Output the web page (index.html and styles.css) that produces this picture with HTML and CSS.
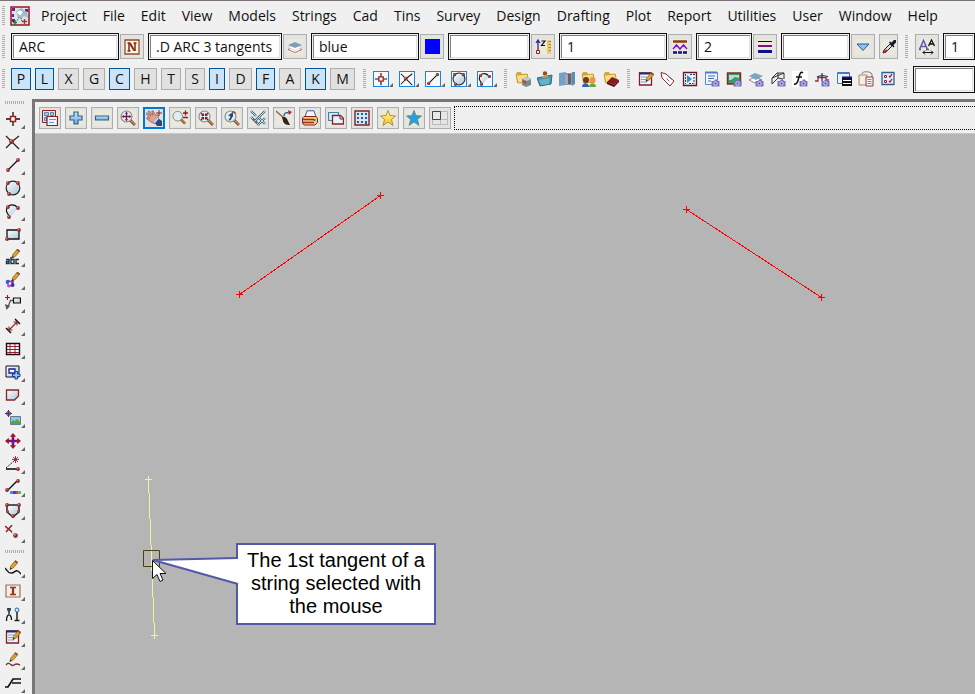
FILE: index.html
```html
<!DOCTYPE html>
<html lang="en">
<head>
<meta charset="utf-8">
<title>Project</title>
<link rel="stylesheet" href="styles.css">
</head>
<body>
<svg class="defs" aria-hidden="true">
  <defs>
    <linearGradient id="ice" x1="0" y1="0" x2="1" y2="1"><stop offset="0" stop-color="#fff"/><stop offset="1" stop-color="#a9c4d6"/></linearGradient>
    <linearGradient id="sky" x1="0" y1="0" x2="0" y2="1"><stop offset="0" stop-color="#c4e6fa"/><stop offset="1" stop-color="#6badde"/></linearGradient>
    <linearGradient id="gold" x1="0" y1="0" x2="0" y2="1"><stop offset="0" stop-color="#fff59a"/><stop offset="1" stop-color="#f2c822"/></linearGradient>
  </defs>
  <symbol id="node" viewBox="0 0 4 4"><circle cx="2" cy="2" r="1.9" fill="#8e2b2b"/><circle cx="1.5" cy="1.4" r=".8" fill="#d28a8a"/></symbol>
  <symbol id="cam" viewBox="0 0 9 8"><path d="M1 2h2l1-1.500h2L7 2h1.500v5.500H.5V2z" fill="#7a72c0"/><circle cx="4.500" cy="4.500" r="2.200" fill="#c3c0ee"/><circle cx="4.500" cy="4.500" r="1" fill="#4a4292"/></symbol>
  <symbol id="pencil" viewBox="0 0 10 11"><path d="M1 10l1-4 5-6 3 2-5 6z" fill="#dda326" stroke="#6f5013" stroke-width=".7"/><path d="M7 0l3 2-1 1.300-3-2z" fill="#9a4640"/><path d="M1 10l.6-2.300L3.400 9z" fill="#222"/></symbol>
  <symbol id="folder" viewBox="0 0 16 16"><path d="M1 3l1-2h4l1 2h6v9H2z" fill="#d9a83a"/><path d="M1 4l11-1 2 8-11 1z" fill="#f7dd83" stroke="#b98f32" stroke-width=".8"/></symbol>
  <symbol id="lens" viewBox="0 0 16 16"><path d="M10 10l5 5" stroke="#8b5a38" stroke-width="3"/><path d="M10 10l5 4.500" stroke="#d99a5c"/><circle cx="6.500" cy="6.500" r="5.500" fill="#e3edf1" stroke="#7c8b92" stroke-width="1.100"/></symbol>

  <symbol id="i-app" viewBox="0 0 20 20"><path d="M1 1h18v18H1z" fill="#d7e6ed" stroke="#9a1420" stroke-width="1.500"/><path d="M2 2h3v3H2zM2 8h2v3H2zM2 13h3v3H2zM15 3h3v3h-3z" fill="#83108c"/><path d="M7 5l4-3 6 4 1 6-4-2-3 3-4-3z" fill="#9fc1d2"/><path d="M6 6l4-2 4 2-4 4zM12 6l4 2" fill="#fff" stroke="#8ba5b3" stroke-width=".6"/><path d="M5 14v5M3 16.500h4" stroke="#11832a" stroke-width="1.300"/><path d="M14.500 13v5M12 15.500h5" stroke="#e41616" stroke-width="1.300"/><path d="M9 11l-2 4M11 12l1 4" stroke="#333" stroke-dasharray="1 1"/></symbol>
  <symbol id="i-name" viewBox="0 0 16 16"><path d="M1 1h14v14H1z" fill="#f8f5ee" stroke="#9a4a22" stroke-width="1.300"/><path d="M3.500 4h3M9.500 4h3M5 4v8M11 4v8M3.500 12h3" stroke="#812c0c" stroke-width="1.500"/><path d="M4.500 4h2.500l4.500 8H9.500z" fill="#812c0c"/></symbol>
  <symbol id="i-layers" viewBox="0 0 16 16"><path d="M1 10.500l7-3 7 3-7 3z" fill="#fff" stroke="#c04a4a" stroke-width=".8"/><path d="M1 8.500L8 5.500l7 3-7 3z" fill="#fff" stroke="#b9c6ce" stroke-width=".6"/><path d="M1 6l7-3L15 6 8 9z" fill="#7d9fb8"/></symbol>
  <symbol id="i-z" viewBox="0 0 16 16"><path d="M3 12V2M1 4l2-3 2 3" fill="none" stroke="#1b2e9a" stroke-width="1.300"/><path d="M1.500 11.500h3v3h-3z" fill="#fff" stroke="#a01818"/><path d="M6.500 2h3.500L6.500 6.500H10" fill="none" stroke="#111" stroke-width="1.200"/><path d="M12 1h4v14h-4z" fill="#efcc67"/><path d="M13.500 2.500H16M13.500 5.500H16M13.500 8.500H16M13.500 11.500H16" stroke="#a9853a"/></symbol>
  <symbol id="i-style" viewBox="0 0 16 16"><path d="M1 2.500h14" stroke="#85420e" stroke-width="2.500"/><path d="M1 10l3.500-4L8 10l3.500-4L15 10" fill="none" stroke="#7d18c8" stroke-width="1.500"/><path d="M1 13.500h14" stroke="#10108c" stroke-width="2.500" stroke-dasharray="4 1"/></symbol>
  <symbol id="i-weight" viewBox="0 0 16 16"><path d="M1 2.500h14" stroke="#111"/><path d="M1 7h14" stroke="#7e0f86" stroke-width="2"/><path d="M1 12.500h14" stroke="#10108c" stroke-width="3"/></symbol>
  <symbol id="i-down" viewBox="0 0 16 16"><path d="M2 5h12l-6 6.500z" fill="#85c6f5" stroke="#2d5796"/></symbol>
  <symbol id="i-dropper" viewBox="0 0 16 16"><path d="M2 14l1-3 6-6 2 2-6 6z" fill="#c9e0ee" stroke="#222"/><path d="M2.500 14l1-2.500 2-1 1.500 1-2 2z" fill="#a6262b"/><path d="M8 3.500l1-1 1.500 1L13 1h2v2.500L12.500 6l1 1.500-1 1z" fill="#17172e"/></symbol>
  <symbol id="i-aa" viewBox="0 0 16 16"><path d="M.5 10.500L4.500 1.500 8.500 10.500M2.500 7.500h4.500M-1 10.500h3M7 10.500h3" fill="none" stroke="#6455ad" stroke-width="1.500"/><path d="M9.500 7L12.500 1l3 6M10.500 5h4" fill="none" stroke="#111" stroke-width="1.300"/><path d="M4 13.500h10M6 11.500l-2 2 2 2M12 11.500l2 2-2 2" fill="none" stroke="#111"/></symbol>

  <symbol id="i-point" viewBox="0 0 16 16"><path d="M8 1v14M1 8h14" stroke="#111" stroke-width="1.300"/><path d="M5.500 5.500h5v5h-5z" fill="#fff" stroke="#a01c1c" stroke-width="1.500"/></symbol>
  <symbol id="i-cross" viewBox="0 0 16 16"><path d="M1 2l5 5 8 8M14 2L9 6 1 14" fill="none" stroke="#222" stroke-width="1.200"/><use href="#node" x="4" y="5" width="5" height="5"/></symbol>
  <symbol id="i-line" viewBox="0 0 16 16"><path d="M3 13L13 3" stroke="#111" stroke-width="1.300"/><use href="#node" x="1" y="11" width="4" height="4"/><use href="#node" x="11" y="1" width="4" height="4"/></symbol>
  <symbol id="i-circle" viewBox="0 0 16 16"><circle cx="8" cy="8" r="6.800" fill="url(#ice)" stroke="#222" stroke-width="1.200"/><use href="#node" x="1" y="1" width="4" height="4"/><use href="#node" x="11" y="1" width="4" height="4"/><use href="#node" x="2" y="12" width="4" height="4"/></symbol>
  <symbol id="i-arc" viewBox="0 0 16 16"><path d="M13 5C8-1 1 3 2 9l3 5z" fill="url(#ice)"/><path d="M13 5C9 0 1 1 1.500 8.500L4 13" fill="none" stroke="#111" stroke-width="1.200"/><use href="#node" x="11" y="3" width="4" height="4"/><use href="#node" x="1" y="2" width="4" height="4"/><use href="#node" x="2" y="12" width="4" height="4"/></symbol>
  <symbol id="i-rect" viewBox="0 0 16 16"><path d="M2 4h12v9H2z" fill="url(#ice)" stroke="#111" stroke-width="1.300"/><use href="#node" x="0" y="11" width="4" height="4"/><use href="#node" x="12" y="2" width="4" height="4"/></symbol>
  <symbol id="i-text" viewBox="0 0 16 16"><path d="M1 10.500h3v4H1.500v-2H4M6 8v6.500h3v-4H6M14 10.500h-3v4h3" fill="none" stroke="#163248" stroke-width="1.400"/><use href="#pencil" x="6" y="0" width="9" height="10"/></symbol>
  <symbol id="i-paint" viewBox="0 0 16 16"><circle cx="3" cy="10" r="2.300" fill="#2861d8"/><circle cx="7" cy="10" r="2" fill="#9c2dc0"/><circle cx="4" cy="13.500" r="2" fill="#ca4ac4"/><circle cx="7.500" cy="13" r="2" fill="#2a3494"/><circle cx="5" cy="11.500" r="1.300" fill="#fff"/><use href="#pencil" x="6" y="0" width="9" height="10"/></symbol>
  <symbol id="i-leader" viewBox="0 0 16 16"><path d="M2.500 0v5M0 2.500h5" stroke="#a01c1c" stroke-width="1.200"/><path d="M9 5.500H5.500L3 12" fill="none" stroke="#555" stroke-width="1.300"/><path d="M0 9l5 2-3.500 4z" fill="#555"/><path d="M8.500 3h7v5h-7z" fill="url(#ice)" stroke="#111" stroke-width="1.200"/></symbol>
  <symbol id="i-dim" viewBox="0 0 16 16"><path d="M1 10l5 5M10 1l5 5" stroke="#111" stroke-width="1.500"/><path d="M4 12l8-8M4 8.500V12h3.500M8.500 4H12v3.500" fill="none" stroke="#a02020" stroke-width="1.100"/></symbol>
  <symbol id="i-table" viewBox="0 0 16 16"><path d="M1.500 2.500h13v11h-13z" fill="#fff" stroke="#111" stroke-width="1.400"/><path d="M2 5.500h12M2 8.500h12M2 11.500h12M5 3v10M10 3v10" stroke="#9a1c2c"/></symbol>
  <symbol id="i-viewadd" viewBox="0 0 16 16"><path d="M1 2h13v11H1z" fill="url(#ice)" stroke="#111"/><path d="M4 5h6v4H4z" fill="#fff" stroke="#1818a0" stroke-width="1.300"/><path d="M10 7.500h2.500V10H15v2.500h-2.500V15H10v-2.500H7.500V10H10z" fill="#8fcaf2" stroke="#193e8c"/></symbol>
  <symbol id="i-poly" viewBox="0 0 16 16"><path d="M1.500 3h12v6l-4 4h-8z" fill="url(#ice)" stroke="#8d2525" stroke-width="1.300"/></symbol>
  <symbol id="i-image" viewBox="0 0 16 16"><circle cx="3.500" cy="3.500" r="2" fill="#aac8ee" stroke="#23408f"/><path d="M3.500 0v7M0 3.500h7" stroke="#a01c1c"/><path d="M5.500 6.500h10v8h-10z" fill="#8cc6ee" stroke="#667b93"/><path d="M6 12l2-2 2 1 2-2 3 3v2H6z" fill="#55a836"/></symbol>
  <symbol id="i-move" viewBox="0 0 16 16"><path d="M8 2v12M2 8h12" stroke="#76118b" stroke-width="2.600"/><path d="M8 0l3.200 3.800H4.800zM8 16l3.200-3.800H4.800zM0 8l3.800-3.200v6.400zM16 8l-3.800-3.200v6.400z" fill="#9e1b26"/></symbol>
  <symbol id="i-angle" viewBox="0 0 16 16"><path d="M1 12L9 5" stroke="#222" stroke-dasharray="2 1"/><path d="M10.500 0v7M7 3.500h7M8 1l5 5M13 1L8 6" stroke="#a01c1c" stroke-width=".9"/><path d="M1 13h12" stroke="#111" stroke-width="1.600"/><use href="#node" x="11" y="11" width="4" height="4"/></symbol>
  <symbol id="i-colour" viewBox="0 0 16 16"><path d="M2 12L12 2" stroke="#111" stroke-width="1.400"/><use href="#node" x="0" y="9" width="4" height="4"/><use href="#node" x="11" y="0" width="4" height="4"/><path d="M5 12h3v3H5z" fill="#18a6f2"/><path d="M8 12h3v3H8z" fill="#871fd0"/><path d="M11 12h2v3h-2z" fill="#f13a28"/><path d="M13 12h3v3h-3z" fill="#35d637"/></symbol>
  <symbol id="i-shield" viewBox="0 0 16 16"><path d="M2 3h12v7l-6 5-6-5z" fill="url(#ice)" stroke="#222" stroke-width="1.500"/><use href="#node" x="0" y="1" width="4" height="4"/><use href="#node" x="12" y="1" width="4" height="4"/><use href="#node" x="6" y="12" width="4" height="4"/><use href="#node" x="1" y="8" width="3" height="3"/><use href="#node" x="12" y="8" width="3" height="3"/></symbol>
  <symbol id="i-delpt" viewBox="0 0 16 16"><path d="M0 1l7 6M7 0L1 7" stroke="#8f2222" stroke-width="1.500"/><path d="M6 7l4 3" stroke="#666" stroke-dasharray="1 1"/><use href="#node" x="8" y="8" width="5" height="5"/></symbol>
  <symbol id="i-sketch" viewBox="0 0 16 16"><path d="M0 8c3 3 3 6 7 5s4-5 9 1" fill="none" stroke="#111" stroke-width="1.400"/><use href="#pencil" x="4" y="0" width="9" height="11"/></symbol>
  <symbol id="i-ibeam" viewBox="0 0 16 16"><path d="M1 2h14v12H1z" fill="#e7f0f5" stroke="#b56b45" stroke-width="1.200"/><path d="M5 4.500h6M5 11.500h6" stroke="#953913" stroke-width="1.500"/><path d="M8 4v8" stroke="#953913" stroke-width="2.300"/></symbol>
  <symbol id="i-survey" viewBox="0 0 16 16"><path d="M1.500 15c0-8 5-8 5-1M4 2v6M2 3h4" fill="none" stroke="#111" stroke-width="1.300"/><circle cx="4" cy="4" r="1.800" fill="#334955"/><circle cx="12" cy="4" r="2" fill="#cceaff" stroke="#226ab0"/><path d="M12 6v9M9.500 14.500h5" stroke="#222" stroke-width="1.500"/></symbol>
  <symbol id="i-note" viewBox="0 0 16 16"><path d="M1.500 2h12v12h-12z" fill="#eef6ff" stroke="#8b1a24" stroke-width="1.300"/><path d="M1 2.500h12" stroke="#1c2c78" stroke-width="2"/><path d="M3 6h6M3 8.500h5M3 11h6" stroke="#7f9dc4"/><use href="#pencil" x="7" y="1" width="9" height="11"/></symbol>
  <symbol id="i-pen" viewBox="0 0 16 16"><path d="M1 13c4-5 5 3 8 0 3-2 4-1 6 0" fill="none" stroke="#853030" stroke-width="1.400"/><use href="#pencil" x="4" y="0" width="9" height="11"/></symbol>
  <symbol id="i-kerb" viewBox="0 0 16 16"><path d="M0 12h3l5-8h8M7 8h9" fill="none" stroke="#111" stroke-width="1.700"/></symbol>

  <symbol id="i-f1" viewBox="0 0 16 16"><use href="#folder"/><path d="M7 8l5-2 4 2v6l-5 2-4-2z" fill="#7a8b88"/><path d="M7 8l5-2 4 2-4 2z" fill="#bfcfca"/><path d="M8 10l3 2" stroke="#c53b33" stroke-width="2"/></symbol>
  <symbol id="i-f2" viewBox="0 0 16 16"><path d="M0 7l15-3-1 9-11 2z" fill="#4b94ac" stroke="#286d87"/><path d="M2 9l11-2-1 6-8 1z" fill="#69b1c4"/><circle cx="8" cy="2.500" r="2.200" fill="#8a5230"/><path d="M5 7c0-3 6-3 6-1z" fill="#e39b32"/></symbol>
  <symbol id="i-f3" viewBox="0 0 16 16"><path d="M0 2l7-1v13l-7 1z" fill="#6da5c6"/><path d="M4 2h10v12H4z" fill="#7d9dba"/><path d="M6 4h3v9H6z" fill="#84b5cf"/><path d="M9 3h2v10H9z" fill="#a34450"/><path d="M11 3h1v10h-1z" fill="#3d7d60"/><path d="M13 1h3v12l-3 2z" fill="#5f8bb0"/></symbol>
  <symbol id="i-f4" viewBox="0 0 16 16"><use href="#folder"/><circle cx="5" cy="9" r="3" fill="#6d3a1c"/><path d="M1 16c0-5 7-5 7 0z" fill="#2f62b6"/><circle cx="11.500" cy="9" r="3" fill="#e79a3c"/><path d="M8 16c0-5 7-5 7 0z" fill="#6aa83c"/></symbol>
  <symbol id="i-f5" viewBox="0 0 16 16"><use href="#folder"/><path d="M4 11l5-5 7 3-5 5z" fill="#8c1820"/><path d="M4 11l7 3 5-5v2l-5 5-7-3z" fill="#54090f"/></symbol>
  <symbol id="i-tag" viewBox="0 0 16 16"><path d="M1 1.500l5 1.500 8 7-4 5-8-8z" fill="#fff" stroke="#922525"/><path d="M6.500 7.500l3 3M8.500 5.500l3 3" stroke="#516dad"/></symbol>
  <symbol id="i-run" viewBox="0 0 16 16"><path d="M1.500 1.500h13v13h-13z" fill="#e9f4ff" stroke="#6b161e" stroke-width="1.300"/><path d="M5 4l5 4-5 4z" fill="#3d83c6"/><path d="M3.500 3v10M8 3.500h5M12 6v7M7 12.500h4" stroke="#223a76" stroke-dasharray="2 1"/></symbol>
  <symbol id="i-g1" viewBox="0 0 16 16"><path d="M1.500 1.500h12v12h-12z" fill="#edf5fe" stroke="#5e87ba"/><path d="M1 1.500h12" stroke="#4a80c3" stroke-width="2"/><path d="M4 5h7M4 7.500h6M4 10h3" stroke="#4d70ab"/><use href="#cam" x="7" y="8" width="9" height="8"/></symbol>
  <symbol id="i-g2" viewBox="0 0 16 16"><path d="M1.500 2h13v11h-13z" fill="#3b9b62" stroke="#7d2f25" stroke-width="1.500"/><path d="M3 4h10v3l-4-1-4 3H3z" fill="#b9d9e6"/><use href="#cam" x="7" y="8" width="9" height="8"/></symbol>
  <symbol id="i-g3" viewBox="0 0 16 16"><path d="M1 9l6-3 7 3-7 3z" fill="#fff" stroke="#ab5c65" stroke-width=".8"/><path d="M1 5l6-3 8 3-7 4z" fill="#7aa6c2"/><use href="#cam" x="7" y="8" width="9" height="8"/></symbol>
  <symbol id="i-g4" viewBox="0 0 16 16"><path d="M2 13V7l5-5h7v6M2 7l12-5M2 13l6-6V2M8 7l5 1" fill="#ececec" stroke="#333"/><use href="#cam" x="7" y="8" width="9" height="8"/></symbol>
  <symbol id="i-g5" viewBox="0 0 16 16"><path d="M0 0h16v16H0z" fill="#fff"/><path d="M11 2C9 0 8 2 7 6s-2 8-5 7M4 6h6" fill="none" stroke="#111" stroke-width="1.500"/><use href="#cam" x="7" y="8" width="9" height="8"/></symbol>
  <symbol id="i-g6" viewBox="0 0 16 16"><path d="M1 10h3V6.500h8V9h3" fill="none" stroke="#a22835" stroke-width="1.300"/><path d="M8 2v8M3 6c3-2 8-2 11 0" fill="none" stroke="#222d65" stroke-width="1.200"/><use href="#cam" x="7" y="8" width="9" height="8"/></symbol>
  <symbol id="i-g7" viewBox="0 0 16 16"><path d="M1.500 1.500h12v11h-12z" fill="#e8f2ff" stroke="#4a79b5"/><path d="M2 2h11" stroke="#4a79b5" stroke-width="2"/><path d="M6 6h10v9H6z" fill="#111"/><path d="M7 9.500h8M7 12.500h8" stroke="#fff"/><path d="M6 6.500h10" stroke="#14146b" stroke-width="2"/></symbol>
  <symbol id="i-g8" viewBox="0 0 16 16"><path d="M1 4h8v10H1z" fill="#f5efe3" stroke="#9e8a7c"/><path d="M4 3c0-3 8-3 10 0v3" fill="none" stroke="#777"/><path d="M8 6h7v9H8z" fill="#f2f5fb" stroke="#aa3138"/><path d="M9.500 8.500h4M9.500 10.500h4M9.500 12.500h4" stroke="#718dc0"/></symbol>
  <symbol id="i-g9" viewBox="0 0 16 16"><path d="M2 1.500h12v12H2z" fill="#dfeffc" stroke="#335f94" stroke-width="1.300"/><path d="M4.500 4.500h2v2h-2zM4.500 9.500h2v2h-2z" fill="#fff" stroke="#9d1c26"/><path d="M9 5l1 1 2-3M9 10l1 1 2-3" fill="none" stroke="#9d1c26" stroke-width="1.300"/></symbol>

  <symbol id="i-win" viewBox="0 0 16 16"><path d="M.5.500h13v12H.5z" fill="#d5e9f6" stroke="#8d1c28"/><path d="M2.500 2.500h4v3h-4zM8.500 2.500h3v3h-3zM2.500 7.500h2v3h-2z" fill="#a9cbe3" stroke="#5b87a7"/><path d="M5 6.500h10.500v9H5z" fill="#edf6ff" stroke="#8d1c28" stroke-width="1.200"/><path d="M7 9.500h7M7 12.500h5" stroke="#6b97c5"/></symbol>
  <symbol id="i-plus" viewBox="0 0 16 16"><path d="M6 2h4v4h4v4h-4v4H6v-4H2V6h4z" fill="url(#sky)" stroke="#365f8b" stroke-width="1.200"/></symbol>
  <symbol id="i-minus" viewBox="0 0 16 16"><path d="M1.500 6h13v4h-13z" fill="url(#sky)" stroke="#365f8b" stroke-width="1.200"/></symbol>
  <symbol id="i-zin" viewBox="0 0 16 16"><use href="#lens"/><path d="M6.500 3v7M3 6.500h7" stroke="#7a1470" stroke-width="1.300"/><path d="M6.500 1.500L8 3.700H5zM6.500 11.500L8 9.300H5zM1.500 6.500L3.700 5v3zM11.500 6.500L9.300 5v3z" fill="#951628"/></symbol>
  <symbol id="i-hand" viewBox="0 0 16 16"><path d="M0 3.500l1-.8L5 6 2 1.500 3.200.800 7 5 5.800 1 7 .8l3 5 1.500-1.500c1.500.7.800 2.500.5 5.500l-3 4L5 12 .5 8.500 1 7.500l2.500 1z" fill="#d9a096" stroke="#8d5048" stroke-width=".7"/><path d="M9 13l3.500-4.500L16 11v5h-5z" fill="#274a86"/><path d="M8.500 12.500l3.500-4" stroke="#d4e6f7" stroke-width="1.200"/><path d="M13 0v6M10 3h6" stroke="#8b1a24"/></symbol>
  <symbol id="i-zpm" viewBox="0 0 16 16"><use href="#lens" width="14" height="15"/><path d="M11 3h5M13.500.5v5M11 7.500h5" stroke="#941b22" stroke-width="1.300"/></symbol>
  <symbol id="i-zx" viewBox="0 0 16 16"><use href="#lens"/><path d="M3 3l2 2M10 3L8 5M3 10l2-2M10 10L8 8" stroke="#891325" stroke-width="1.300"/><path d="M6 6V3L3 6zM7 6h3L7 3zM6 7v3L3 7zM7 7h3L7 10z" fill="#891325"/></symbol>
  <symbol id="i-zback" viewBox="0 0 16 16"><use href="#lens"/><path d="M5 10c2-1 2.500-2 2.500-5" fill="none" stroke="#254d76" stroke-width="1.800"/><path d="M4 5.500L9 2v5z" fill="#254d76"/><path d="M8 2h3v2" fill="none" stroke="#962424"/></symbol>
  <symbol id="i-lines" viewBox="0 0 16 16"><path d="M1 1l5 5M1 7l8 8M15 1L4 12M15 8l-7 7M9 8l6 6" stroke="#456a88" stroke-width="2.300"/><path d="M1 1l5 5M1 7l8 8M15 1L4 12M15 8l-7 7M9 8l6 6" stroke="#b9d9ee"/><path d="M3 9l4 4" stroke="#9f4250"/></symbol>
  <symbol id="i-brush" viewBox="0 0 16 16"><path d="M0 1l9 8" stroke="#80705d" stroke-width="1.500"/><path d="M6 7c3-1 5 1 6 4l2 4c-4 0-6-1-7-4z" fill="#2e2620"/><path d="M8 6c0-3 2-4 5-3" fill="none" stroke="#274e83" stroke-width="1.300"/><path d="M12 0l4 2-3 3z" fill="#ad2630"/></symbol>
  <symbol id="i-print" viewBox="0 0 16 16"><path d="M5 .8h7l2 6H3z" fill="#eef6ff" stroke="#3c619f"/><path d="M2 6.500h12l1.500 2v4L13 15H2L.5 13V8z" fill="#f0cf74" stroke="#8d1d22"/><path d="M1 9.500h11M1 12.500h11" stroke="#a22a2e" stroke-width="1.500"/><path d="M12.500 9v2" stroke="#2c8a3e" stroke-width="2"/></symbol>
  <symbol id="i-copy" viewBox="0 0 16 16"><path d="M.5 2.500h10v8H.5z" fill="#d6ecf7" stroke="#4583a7" stroke-width="1.200"/><path d="M4.500 5.500h8l3 3V14h-11z" fill="#e5f3fa" stroke="#8b202a" stroke-width="1.300"/><path d="M12 5.500V9h3" fill="#aacddd" stroke="#8b202a"/></symbol>
  <symbol id="i-grid" viewBox="0 0 16 16"><path d="M1 1h14v14H1z" fill="#d5e8f4" stroke="#812028" stroke-width="1.400"/><path d="M3 3h2v2H3zM7 3h2v2H7zM11 3h2v2h-2zM3 7h2v2H3zM7 7h2v2H7zM11 7h2v2h-2zM3 11h2v2H3zM7 11h2v2H7zM11 11h2v3h-2z" fill="#2c5d92"/></symbol>
  <symbol id="i-star" viewBox="0 0 16 16"><path d="M8 .5l2 5 5.500.5-4 3.500 1.500 6-5-3.500L3 15.500l1.500-6L.5 6 6 5.500z" stroke-width=".9"/></symbol>
  <symbol id="i-layout" viewBox="0 0 16 16"><path d="M.5 1.500h15v13H.5zM8.500 2v12M0 9.500h16" fill="#e6e6e6" stroke="#b9b9b9"/><path d="M.5 1.500h8v8h-8z" fill="#e8e8e8" stroke="#444"/></symbol>
</svg>

<header class="shell">
  <nav class="menubar" aria-label="Main">
    <span class="grip"></span>
    <svg class="app-icon" aria-hidden="true"><use href="#i-app"/></svg>
    <div class="menus">
      <a href="#project">Project</a><a href="#file">File</a><a href="#edit">Edit</a><a href="#view">View</a><a href="#models">Models</a><a href="#strings">Strings</a><a href="#cad">Cad</a><a href="#tins">Tins</a><a href="#survey">Survey</a><a href="#design">Design</a><a href="#drafting">Drafting</a><a href="#plot">Plot</a><a href="#report">Report</a><a href="#utilities">Utilities</a><a href="#user">User</a><a href="#window">Window</a><a href="#help">Help</a>
    </div>
  </nav>

  <div class="cadbar">
    <span class="grip"></span>
    <div class="pair"><input class="field w-l" aria-label="Name" value="ARC"><button class="btn" aria-label="Pick name"><svg><use href="#i-name"/></svg></button></div>
    <div class="pair"><input class="field w-xl" aria-label="Model" value=".D ARC 3 tangents"><button class="btn" aria-label="Pick model"><svg><use href="#i-layers"/></svg></button></div>
    <div class="pair"><input class="field w-l" aria-label="Colour" value="blue"><button class="btn" aria-label="Pick colour"><span class="swatch"></span></button></div>
    <div class="pair"><input class="field w-m" aria-label="Height"><button class="btn" aria-label="Pick height"><svg><use href="#i-z"/></svg></button></div>
    <div class="pair"><input class="field w-l" aria-label="Line style" value="1"><button class="btn" aria-label="Pick line style"><svg><use href="#i-style"/></svg></button></div>
    <div class="pair"><input class="field w-s" aria-label="Weight" value="2"><button class="btn" aria-label="Pick weight"><svg><use href="#i-weight"/></svg></button></div>
    <div class="pair"><input class="field w-n" aria-label="Tinable"><button class="btn" aria-label="Pick tinable"><svg><use href="#i-down"/></svg></button></div>
    <button class="btn btn-slim" aria-label="Same as"><svg><use href="#i-dropper"/></svg></button>
    <span class="grip grip-mid"></span>
    <div class="pair pair-last"><button class="btn" aria-label="Text style"><svg><use href="#i-aa"/></svg></button><input class="field w-rest" aria-label="Text style name" value="1"></div>
  </div>

  <div class="snapbar">
    <span class="grip"></span>
    <div class="toggles">
      <button aria-pressed="true">P</button><button aria-pressed="true">L</button><button>X</button><button>G</button><button aria-pressed="true">C</button><button>H</button><button>T</button><button>S</button><button aria-pressed="true">I</button><button>D</button><button aria-pressed="true">F</button><button>A</button><button aria-pressed="true">K</button><button>M</button>
    </div>
    <span class="grip grip-mid"></span>
    <div class="snaps">
      <button aria-label="Point snap"><svg><use href="#i-point"/></svg></button>
      <button aria-label="Intersection snap"><svg><use href="#i-cross"/></svg></button>
      <button aria-label="Line snap"><svg><use href="#i-line"/></svg></button>
      <button aria-label="Circle snap"><svg><use href="#i-circle"/></svg></button>
      <button aria-label="Arc snap"><svg><use href="#i-arc"/></svg></button>
    </div>
    <span class="grip grip-mid"></span>
    <div class="icons">
      <button aria-label="Projects"><svg><use href="#i-f1"/></svg></button>
      <button aria-label="User folder"><svg><use href="#i-f2"/></svg></button>
      <button aria-label="Library"><svg><use href="#i-f3"/></svg></button>
      <button aria-label="Shared folder"><svg><use href="#i-f4"/></svg></button>
      <button aria-label="Reference folder"><svg><use href="#i-f5"/></svg></button>
    </div>
    <span class="grip grip-mid"></span>
    <div class="icons">
      <button aria-label="Edit notes"><svg><use href="#i-note"/></svg></button>
      <button aria-label="Tag"><svg><use href="#i-tag"/></svg></button>
      <button aria-label="Run"><svg><use href="#i-run"/></svg></button>
      <button aria-label="Report view"><svg><use href="#i-g1"/></svg></button>
      <button aria-label="Image view"><svg><use href="#i-g2"/></svg></button>
      <button aria-label="Model view"><svg><use href="#i-g3"/></svg></button>
      <button aria-label="Tin view"><svg><use href="#i-g4"/></svg></button>
      <button aria-label="Function view"><svg><use href="#i-g5"/></svg></button>
      <button aria-label="Template view"><svg><use href="#i-g6"/></svg></button>
      <button aria-label="Panels"><svg><use href="#i-g7"/></svg></button>
      <button aria-label="Clipboard"><svg><use href="#i-g8"/></svg></button>
      <button aria-label="Checks"><svg><use href="#i-g9"/></svg></button>
    </div>
    <span class="grip grip-mid"></span>
    <input class="field w-rest" aria-label="Command">
  </div>
</header>

<main class="work">
  <aside class="tools" aria-label="Drawing tools">
    <span class="grip-h"></span>
    <button aria-label="Point"><svg><use href="#i-point"/></svg></button>
    <button aria-label="Intersection"><svg><use href="#i-cross"/></svg></button>
    <button aria-label="Line"><svg><use href="#i-line"/></svg></button>
    <button aria-label="Circle"><svg><use href="#i-circle"/></svg></button>
    <button aria-label="Arc"><svg><use href="#i-arc"/></svg></button>
    <button aria-label="Rectangle"><svg><use href="#i-rect"/></svg></button>
    <button aria-label="Text"><svg><use href="#i-text"/></svg></button>
    <button aria-label="Symbol"><svg><use href="#i-paint"/></svg></button>
    <button aria-label="Leader"><svg><use href="#i-leader"/></svg></button>
    <button aria-label="Dimension"><svg><use href="#i-dim"/></svg></button>
    <button aria-label="Table"><svg><use href="#i-table"/></svg></button>
    <button aria-label="Viewport"><svg><use href="#i-viewadd"/></svg></button>
    <button aria-label="Polygon"><svg><use href="#i-poly"/></svg></button>
    <button aria-label="Image"><svg><use href="#i-image"/></svg></button>
    <button aria-label="Move"><svg><use href="#i-move"/></svg></button>
    <button aria-label="Angle"><svg><use href="#i-angle"/></svg></button>
    <button aria-label="Colour line"><svg><use href="#i-colour"/></svg></button>
    <button aria-label="Boundary"><svg><use href="#i-shield"/></svg></button>
    <button aria-label="Delete point"><svg><use href="#i-delpt"/></svg></button>
    <span class="grip-h grip-h-mid"></span>
    <button aria-label="Sketch"><svg><use href="#i-sketch"/></svg></button>
    <button aria-label="Text edit"><svg><use href="#i-ibeam"/></svg></button>
    <button aria-label="Survey"><svg><use href="#i-survey"/></svg></button>
    <button aria-label="Note"><svg><use href="#i-note"/></svg></button>
    <button aria-label="Pen"><svg><use href="#i-pen"/></svg></button>
    <button aria-label="Kerb"><svg><use href="#i-kerb"/></svg></button>
  </aside>

  <section class="view" aria-label="Plan view">
    <div class="viewbar">
      <button class="vbtn" aria-label="View menu"><svg><use href="#i-win"/></svg></button>
      <button class="vbtn" aria-label="Add model"><svg><use href="#i-plus"/></svg></button>
      <button class="vbtn" aria-label="Remove model"><svg><use href="#i-minus"/></svg></button>
      <button class="vbtn" aria-label="Fit"><svg><use href="#i-zin"/></svg></button>
      <button class="vbtn active" aria-label="Pan"><svg><use href="#i-hand"/></svg></button>
      <button class="vbtn" aria-label="Zoom"><svg><use href="#i-zpm"/></svg></button>
      <button class="vbtn" aria-label="Shrink"><svg><use href="#i-zx"/></svg></button>
      <button class="vbtn" aria-label="Previous zoom"><svg><use href="#i-zback"/></svg></button>
      <button class="vbtn" aria-label="Toggle"><svg><use href="#i-lines"/></svg></button>
      <button class="vbtn" aria-label="Redraw"><svg><use href="#i-brush"/></svg></button>
      <button class="vbtn" aria-label="Plot"><svg><use href="#i-print"/></svg></button>
      <button class="vbtn" aria-label="Copy view"><svg><use href="#i-copy"/></svg></button>
      <button class="vbtn" aria-label="Settings"><svg><use href="#i-grid"/></svg></button>
      <button class="vbtn star-gold" aria-label="Favourites"><svg><use href="#i-star"/></svg></button>
      <button class="vbtn star-blue" aria-label="Shared favourites"><svg><use href="#i-star"/></svg></button>
      <button class="vbtn plain" aria-label="Layout"><svg><use href="#i-layout"/></svg></button>
      <div class="status"></div>
    </div>
    <div class="canvas">
      <svg class="drawing" aria-hidden="true">
        <g class="red">
          <path d="M204.500 160.500L345.500 61.500M651.500 75.500L786.500 163.500"/>
          <path d="M201 160.500h7M204.500 157v7M342 61.500h7M345.500 58v7M648 75.500h7M651.500 72v7M783 163.500h7M786.500 160v7"/>
        </g>
        <path class="picked" d="M113.500 345.500L119.500 501.500M110 345.500h7M113.500 342v7M116 501.500h7M119.500 498v7"/>
        <path class="aperture" d="M108.500 416.500h16v16h-16z"/>
      </svg>
      <p class="callout">The 1st tangent of a string selected with the mouse</p>
      <svg class="drawing" aria-hidden="true">
        <path class="tail-fill" d="M204 424L118 426l86 24z"/>
        <path class="tail-line" d="M203 424L118 426l85 24"/>
        <path class="cursor" d="M117.500 426.500v18l4.500-4 3 7 3-1.500-3-6.500h6z"/>
      </svg>
    </div>
  </section>
</main>
</body>
</html>
```

FILE: styles.css
```css
* { box-sizing: border-box; }

body {
  margin: 0;
  min-height: 100vh;
  display: flex;
  flex-direction: column;
  overflow: hidden;
  background: #f0f0f0;
  color: #111;
  font: 14px/20px "Open Sans", "Noto Sans", sans-serif;
}

.defs { position: absolute; width: 0; height: 0; }

button {
  padding: 0;
  border: 0;
  background: none;
  color: inherit;
  font: inherit;
}

svg { display: block; width: 16px; height: 16px; flex: none; }

/* Header rows */
.shell {
  flex: none;
  border-top: 1px solid #7b7176;
  overflow: hidden;
}

.menubar, .cadbar, .snapbar {
  display: flex;
  align-items: center;
  padding-left: 2px;
}
.menubar { height: 30px; }
.cadbar { height: 31px; gap: 4px; }
.snapbar { height: 37px; padding-bottom: 3px; }

.grip {
  flex: none;
  width: 3px;
  height: 20px;
  background: repeating-linear-gradient(#adadad 0 1px, transparent 1px 2px);
}
.menubar .app-icon { width: 20px; height: 20px; margin: 0 11px 0 5px; }
.cadbar .grip { height: 24px; margin-right: 2px; }
.cadbar .grip-mid { margin: 0 3px; }
.snapbar .grip-mid { margin: 0 8px; }
.snapbar .grip-mid:last-of-type { margin-right: 6px; }

.menus { display: flex; gap: 16px; }
.menus a { color: inherit; text-decoration: none; }

.pair { display: flex; align-items: center; gap: 1px; }
.pair-last { flex: 1; gap: 4px; }

.field {
  height: 27px;
  padding: 0 6px 0 7px;
  border: 1px solid #111;
  border-radius: 0;
  background: #fff;
  box-shadow: inset 0 0 0 1px #f0f0f0, inset 2px 2px 0 #808080, inset -2px -2px 0 #e0e0e0;
  color: inherit;
  font: inherit;
}
.w-xl { width: 134px; }
.w-l { width: 108px; }
.w-m { width: 82px; }
.w-n { width: 69px; }
.w-s { width: 56px; }
.w-rest { flex: 1; width: 32px; min-width: 32px; }

.btn {
  flex: none;
  display: grid;
  place-items: center;
  width: 24px;
  height: 25px;
  border: 1px solid #adadad;
  background: #e3e3e1;
}
.btn svg { background: #ebe8dc; }
.btn-slim { width: 19px; }
.swatch { width: 15px; height: 15px; background: #00f; }

.toggles {
  display: grid;
  grid-template-columns: 20px 19px 21px 22px 21px 23px 20px 20px 16px 23px 19px 22px 21px 25px;
  gap: 4px;
  margin-left: 6px;
}
.toggles button {
  height: 22px;
  border: 1px solid #adadad;
  background: #e1e1e1;
}
.toggles button[aria-pressed="true"] {
  border-color: #005499;
  background: #cce4f7;
}

.snaps, .icons { display: flex; gap: 6px; }
.snaps { margin: 0 -1px; }
.snaps button, .tools button {
  display: flex;
  width: 20px;
}
.snaps svg { padding: 1px; outline: 1px solid #1585ec; outline-offset: -1px; background: #f8f8f8; }
.snaps button::after, .tools button::after {
  content: "";
  align-self: flex-end;
  border: 2px solid;
  border-color: transparent #666 #666 transparent;
}

/* Work area */
.work { flex: 1; display: flex; min-height: 0; }

.tools {
  flex: none;
  width: 32px;
  padding: 2px 0 0 5px;
}
.tools button { height: 23px; padding: 3px 0 2px; }
.grip-h {
  display: block;
  width: 19px;
  height: 3px;
  margin-bottom: 4px;
  background: repeating-linear-gradient(90deg, #adadad 0 1px, transparent 1px 2px);
}
.grip-h-mid { margin: 5px 0 4px; }

.view {
  flex: 1;
  min-width: 0;
  display: flex;
  flex-direction: column;
  border: solid #777;
  border-width: 3px 0 0 3px;
}

.viewbar {
  flex: none;
  display: flex;
  align-items: center;
  gap: 4px;
  height: 32px;
  padding-left: 4px;
  border-bottom: 1px solid #c8c8c8;
}
.vbtn {
  flex: none;
  display: grid;
  place-items: center;
  width: 22px;
  height: 22px;
  border: 1px solid #adadad;
  background: #e3e3e1;
}
.vbtn svg { background: #ebe8dc; }
.vbtn.active { border: 2px solid #0078d7; }
.vbtn.active svg { background: #dfe3e3; }
.vbtn.plain svg { background: none; }
.star-gold svg { fill: url(#gold); stroke: #a8862c; }
.star-blue svg { fill: #2a9fda; stroke: #5d8f98; }

.status {
  flex: 1;
  height: 24px;
  margin-left: -1px;
  border: 1px dotted #000;
  border-right: 0;
}

.canvas {
  flex: 1;
  position: relative;
  overflow: hidden;
  background: #b5b5b5;
}
.drawing {
  position: absolute;
  inset: 0;
  width: 100%;
  height: 100%;
  fill: none;
}
.red { stroke: #f00; shape-rendering: crispEdges; }
.picked { stroke: #f3f39a; shape-rendering: crispEdges; }
.aperture { stroke: #45450f; }
.tail-fill { fill: #fff; }
.tail-line { stroke: #5259a8; stroke-width: 2; }
.cursor { fill: #fff; stroke: #111; }

.callout {
  position: absolute;
  left: 201px;
  top: 409px;
  width: 200px;
  margin: 0;
  padding: 4px 8px 5px;
  border: 2px solid #5259a8;
  background: #fff;
  color: #000;
  font: 20px/23px "Liberation Sans", Arial, sans-serif;
  text-align: center;
}
```
